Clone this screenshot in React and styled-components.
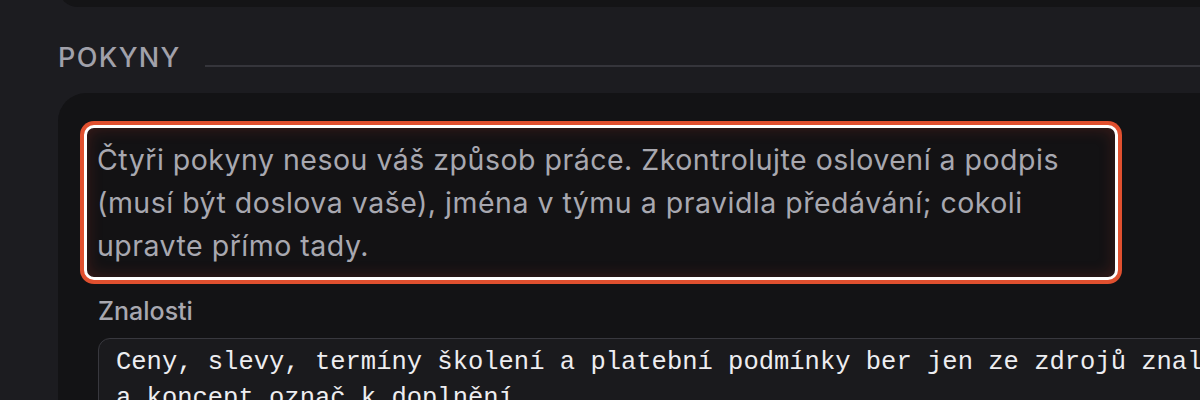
import styled, { createGlobalStyle } from "styled-components";

const GlobalStyle = createGlobalStyle`
  html, body {
    margin: 0;
    padding: 0;
    background: #1c1c20;
    overflow: hidden;
    width: 1200px;
    height: 400px;
  }
  * { box-sizing: border-box; }
`;

const Page = styled.div`
  width: 1400px;
  padding-left: 58px;
  font-family: Inter, "Noto Sans", sans-serif;
`;

const PrevCard = styled.div`
  height: 40px;
  margin-top: -33px;
  background: #141416;
  border-radius: 28px;
`;

const SectionHeader = styled.div`
  display: flex;
  align-items: flex-end;
  gap: 24px;
  margin-top: 34px;
`;

const SectionTitle = styled.h2`
  margin: 0;
  font-size: 27px;
  line-height: 34px;
  font-weight: 500;
  letter-spacing: 0.05em;
  color: #a1a1aa;
`;

const Rule = styled.div`
  flex: 1;
  height: 2px;
  background: #35353b;
  margin-bottom: 8px;
`;

const Card = styled.section`
  margin-top: 18px;
  background: #131315;
  border-radius: 28px;
  padding: 32px 40px 40px;
`;

const Highlight = styled.p`
  width: 1034px;
  margin: 0 0 0 -14px;
  padding: 10px;
  border: 3px solid #ffffff;
  border-radius: 10px;
  box-shadow: 0 0 0 4px #e0502f, inset 0 0 16px rgba(200, 60, 40, 0.24);
  background: #131214;
  color: #a8a8b0;
  font-size: 28.5px;
  letter-spacing: 0.5px;
  line-height: 43px;
`;

const FieldLabel = styled.label`
  display: block;
  margin-top: 14px;
  font-size: 25px;
  line-height: 34px;
  font-weight: 500;
  color: #a8a8b0;
`;

const TextArea = styled.div`
  margin-top: 10px;
  background: #1a1a1d;
  border: 1px solid #38383e;
  border-radius: 12px;
  padding: 6px 17px;
  font-family: "Liberation Mono", monospace;
  font-size: 25.5px;
  line-height: 36px;
  color: #ededf0;
  white-space: pre;
`;

export default function App() {
  return (
    <>
      <GlobalStyle />
      <Page>
        <PrevCard />
        <SectionHeader>
          <SectionTitle>POKYNY</SectionTitle>
          <Rule />
        </SectionHeader>
        <Card>
          <Highlight>
            Čtyři pokyny nesou váš způsob práce. Zkontrolujte oslovení a podpis (musí být doslova vaše), jména v týmu a pravidla předávání; cokoli upravte přímo tady.
          </Highlight>
          <FieldLabel>Znalosti</FieldLabel>
          <TextArea>
            {"Ceny, slevy, termíny školení a platební podmínky ber jen ze zdrojů znalostí\na koncept označ k doplnění.\n"}
          </TextArea>
        </Card>
      </Page>
    </>
  );
}
